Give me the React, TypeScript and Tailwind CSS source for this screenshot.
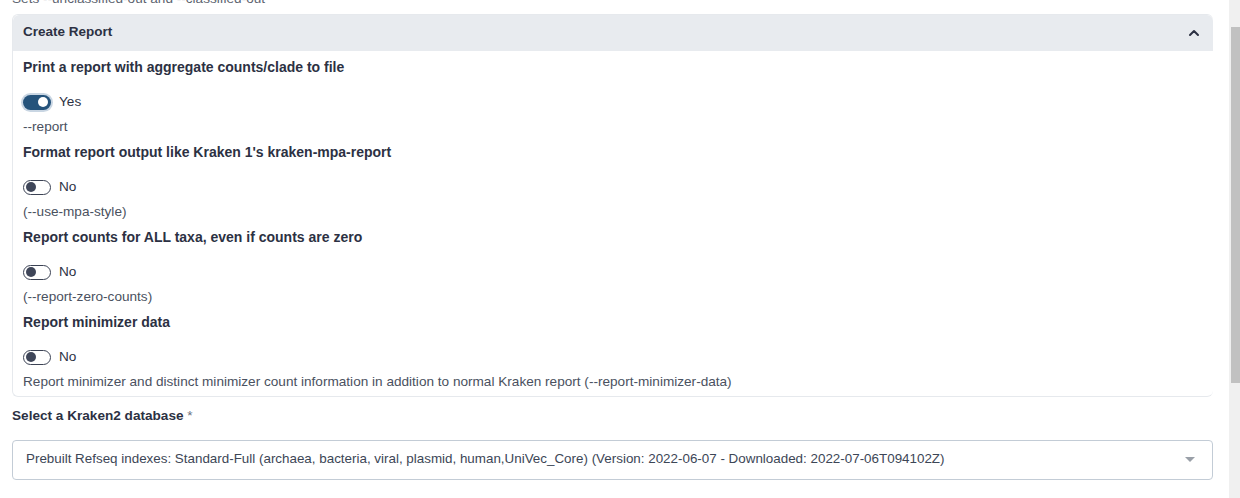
import { ChevronUp } from 'lucide-react'

const fields = [
  { title: 'Print a report with aggregate counts/clade to file', on: true, help: '--report' },
  { title: "Format report output like Kraken 1's kraken-mpa-report", on: false, help: '(--use-mpa-style)' },
  { title: 'Report counts for ALL taxa, even if counts are zero', on: false, help: '(--report-zero-counts)' },
  {
    title: 'Report minimizer data',
    on: false,
    help: 'Report minimizer and distinct minimizer count information in addition to normal Kraken report (--report-minimizer-data)',
  },
]

function Toggle({ on }: { on: boolean }) {
  if (on)
    return (
      <span className="relative inline-flex h-[15px] w-[28px] items-center rounded-full bg-[#25537b] shadow-[0_0_0_2px_#c9d6e3]">
        <span className="absolute right-[3px] h-[10px] w-[10px] rounded-full bg-white" />
      </span>
    )
  return (
    <span className="relative inline-flex h-[15px] w-[28px] items-center rounded-full border border-[#3b4254] bg-white">
      <span className="absolute left-[2px] h-[10px] w-[10px] rounded-full bg-[#3f4659]" />
    </span>
  )
}

export default function App() {
  return (
    <div className="flex h-[498px] overflow-hidden bg-white text-[13.6px] text-[#2c3143]" style={{ fontFamily: '"Liberation Sans", Arial, sans-serif' }}>
      <div className="w-[1213px] pl-[12px]">
        <div className="-mt-[11px] h-[20px] leading-[20px] text-[#5d6470]">Sets --unclassified-out and --classified-out</div>
        <div className="mt-[5px] rounded-md border border-[#e6e9ed] border-r-0">
          <div className="flex h-[36px] items-center justify-between rounded-t-md bg-[#e8ebef] px-[10px] pb-[1px] text-[13.5px] font-bold">
            <span>Create Report</span>
            <ChevronUp size={16} strokeWidth={3} className="mr-[1px] text-[#2c3143]" />
          </div>
          <div className="px-[10px] pt-[6px] pb-[4px]">
            {fields.map((f, i) => (
              <div key={i} className={i < fields.length - 1 ? 'mb-[5px]' : ''}>
                <div className="mb-[15px] text-[14px] leading-[20px] font-bold">{f.title}</div>
                <div className="flex h-[20px] items-center gap-[8px]">
                  <Toggle on={f.on} />
                  <span>{f.on ? 'Yes' : 'No'}</span>
                </div>
                <div className="mt-[5px] leading-[20px] text-[#4a5160]">{f.help}</div>
              </div>
            ))}
          </div>
        </div>
        <div className="mt-[9px] text-[13.6px] leading-[20px] font-bold">
          Select a Kraken2 database <span className="font-normal text-[#6b7280]">*</span>
        </div>
        <div className="mt-[14px] flex h-[40px] items-center justify-between rounded-[4px] border border-[#c3ccd6] pr-[17px] pb-[2px] pl-[13px] text-[13.4px] text-[#3c4656]">
          <span>
            Prebuilt Refseq indexes: Standard-Full (archaea, bacteria, viral, plasmid, human,UniVec_Core) (Version: 2022-06-07 - Downloaded: 2022-07-06T094102Z)
          </span>
          <span className="h-0 w-0 border-x-[5px] border-t-[5px] border-x-transparent border-t-[#9aa0a8]" />
        </div>
      </div>
      <div className="ml-[16px] flex w-[11px] flex-col bg-[#f0f0f0]">
        <div className="mt-[27px] ml-[2px] h-[356px] bg-[#c1c1c1]" />
      </div>
    </div>
  )
}
